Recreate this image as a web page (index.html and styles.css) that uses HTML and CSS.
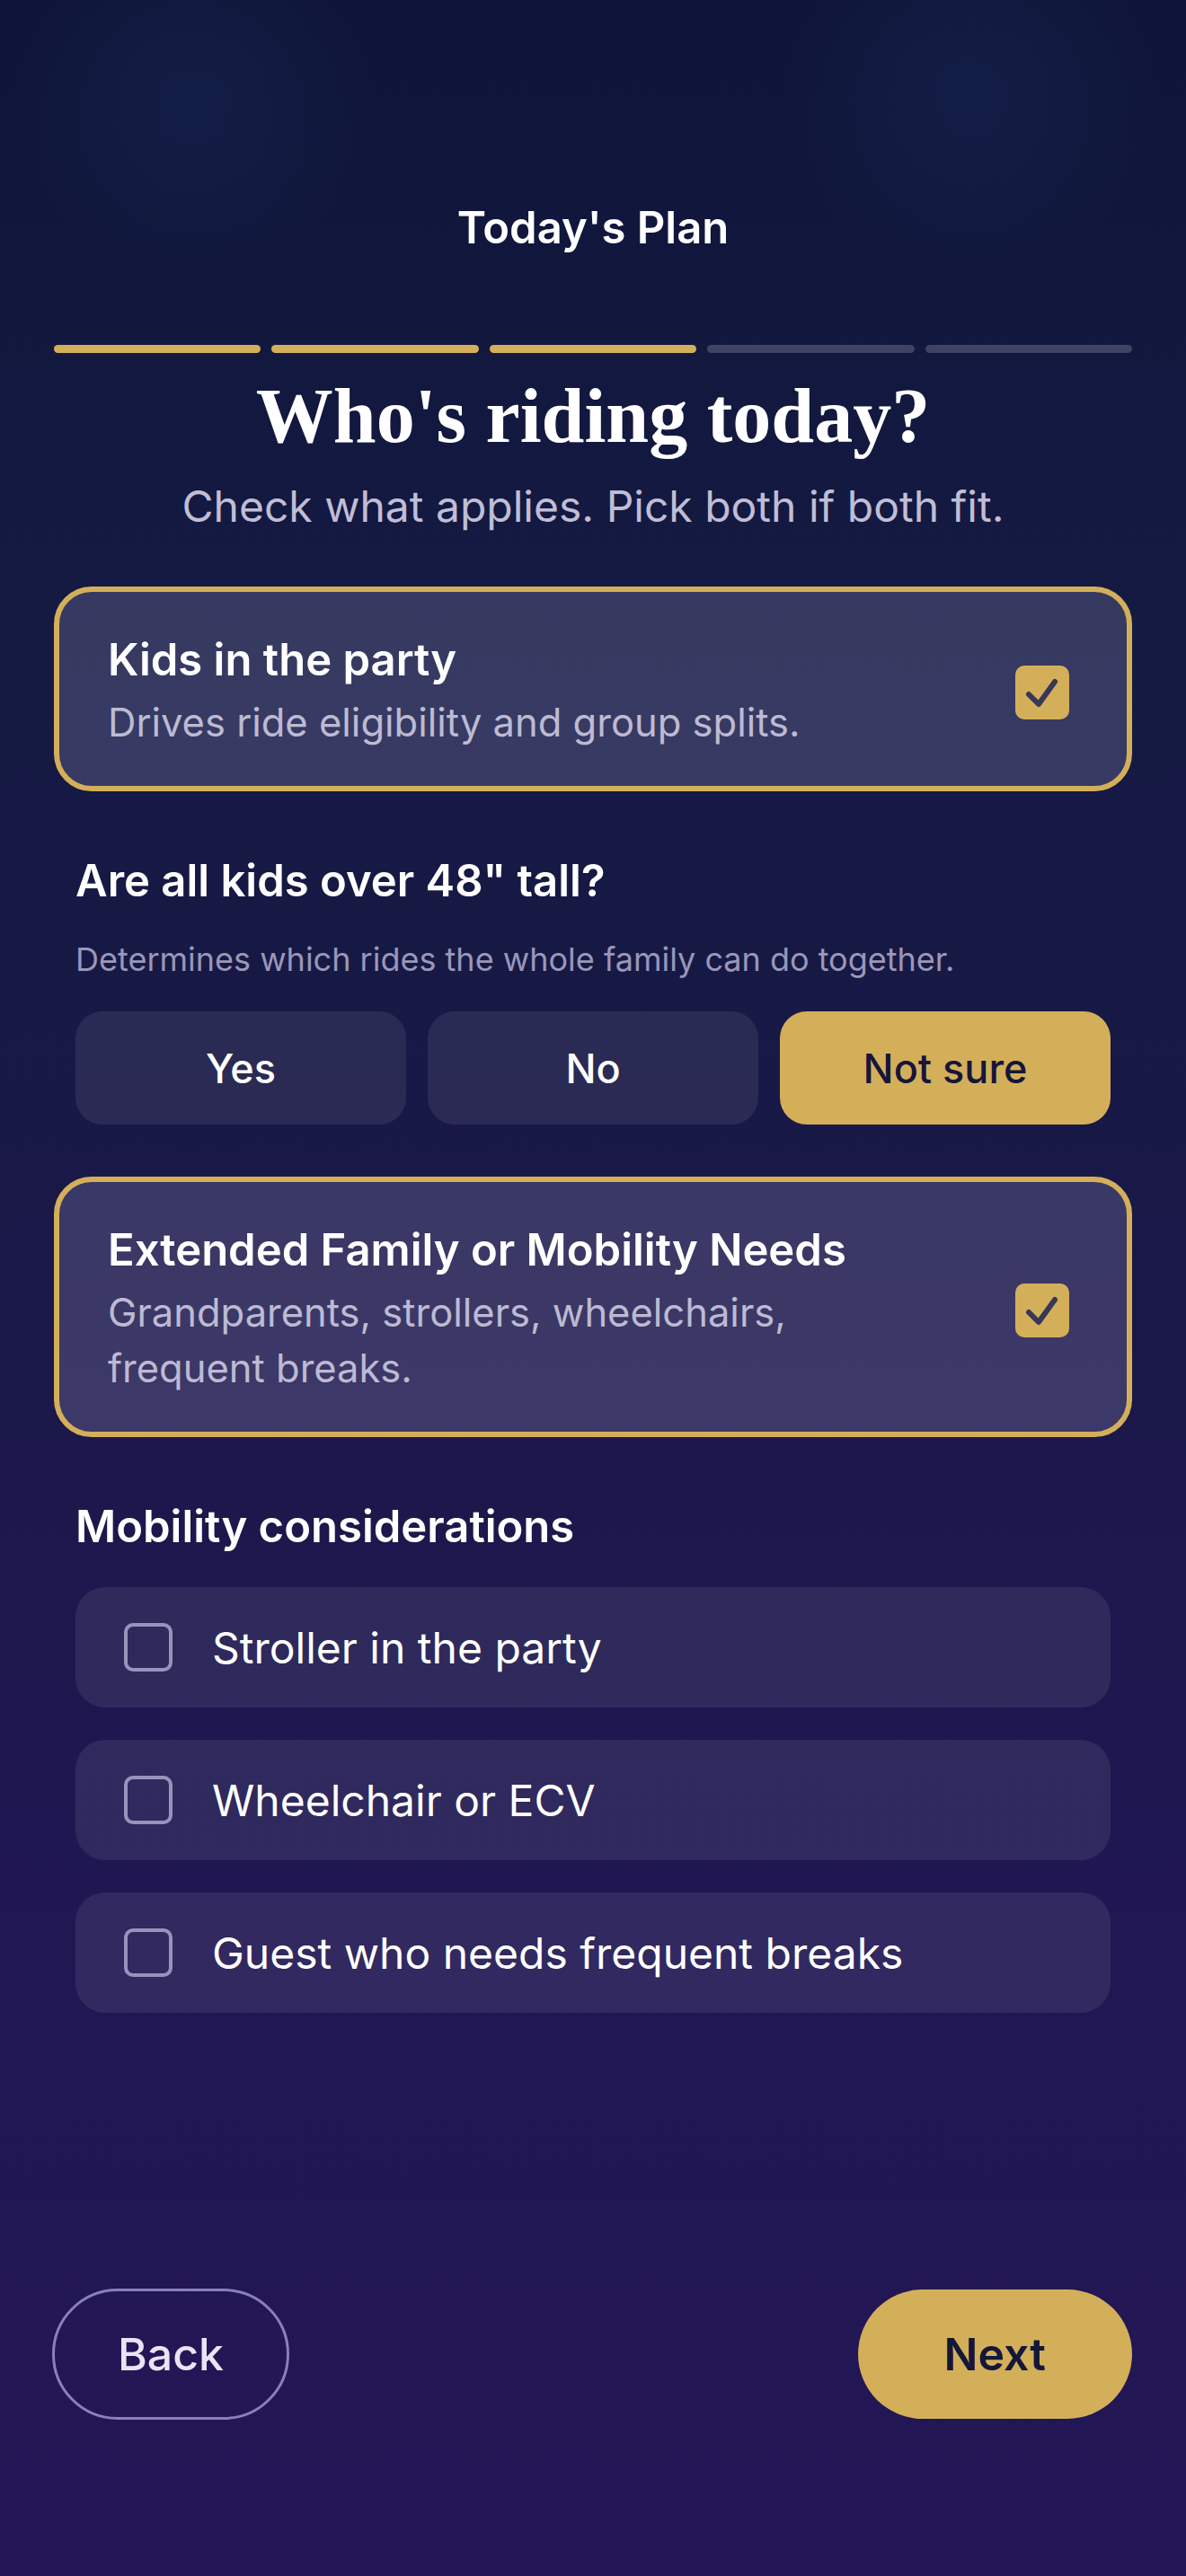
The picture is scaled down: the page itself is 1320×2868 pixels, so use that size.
FILE: index.html
```html
<!DOCTYPE html>
<html lang="en">
<head>
    <meta charset="UTF-8">
    <meta name="viewport" content="width=device-width, initial-scale=1.0">
    <title>Today's Plan</title>
    <link rel="stylesheet" href="styles.css">
</head>
<body>
    <div class="screen">
        <header class="topbar">
            <h2 class="topbar-title">Today's Plan</h2>
        </header>

        <div class="progress">
            <span class="step done"></span>
            <span class="step done"></span>
            <span class="step done"></span>
            <span class="step"></span>
            <span class="step"></span>
        </div>

        <h1 class="headline">Who's riding today?</h1>
        <p class="lead">Check what applies. Pick both if both fit.</p>

        <div class="option-card selected">
            <div class="option-text">
                <div class="option-title">Kids in the party</div>
                <div class="option-desc">Drives ride eligibility and group splits.</div>
            </div>
            <span class="check on">
                <svg viewBox="0 0 60 60" width="60" height="60"><path d="M15 32 L26 43 L44 18" /></svg>
            </span>
        </div>

        <section class="followup">
            <h3 class="followup-title">Are all kids over 48" tall?</h3>
            <p class="followup-hint">Determines which rides the whole family can do together.</p>
            <div class="segmented">
                <button class="seg">Yes</button>
                <button class="seg">No</button>
                <button class="seg active">Not sure</button>
            </div>
        </section>

        <div class="option-card selected">
            <div class="option-text">
                <div class="option-title">Extended Family or Mobility Needs</div>
                <div class="option-desc">Grandparents, strollers, wheelchairs, frequent breaks.</div>
            </div>
            <span class="check on">
                <svg viewBox="0 0 60 60" width="60" height="60"><path d="M15 32 L26 43 L44 18" /></svg>
            </span>
        </div>

        <section class="followup">
            <h3 class="followup-title">Mobility considerations</h3>
            <div class="toggle-list">
                <label class="toggle-row"><span class="box"></span>Stroller in the party</label>
                <label class="toggle-row"><span class="box"></span>Wheelchair or ECV</label>
                <label class="toggle-row"><span class="box"></span>Guest who needs frequent breaks</label>
            </div>
        </section>

        <footer class="nav">
            <button class="btn-back">Back</button>
            <button class="btn-next">Next</button>
        </footer>
    </div>
</body>
</html>
```

FILE: styles.css
```css
* {
    box-sizing: border-box;
}
body {
    margin: 0;
    font-family: Inter, "Noto Sans", sans-serif;
    color: #ffffff;
    background-color: #171845;
    background-image:
        radial-gradient(circle at 215px 110px, rgba(24, 44, 92, 0.35) 0, rgba(24, 44, 92, 0) 200px),
        radial-gradient(circle at 1080px 100px, rgba(24, 44, 92, 0.35) 0, rgba(24, 44, 92, 0) 210px),
        linear-gradient(180deg, #0f1539 0%, #141a42 25%, #1a1848 50%, #201753 75%, #241656 100%);
}
.screen {
    min-height: 100vh;
    display: flex;
    flex-direction: column;
    padding: 0 60px 174px;
}
.topbar {
    padding-top: 224px;
    text-align: center;
}
.topbar-title {
    margin: 0;
    font-size: 49px;
    line-height: 60px;
    font-weight: 600;
}
.progress {
    margin-top: 100px;
    display: flex;
    gap: 12px;
}
.step {
    flex: 1;
    height: 9px;
    border-radius: 5px;
    background: #3f4263;
}
.step.done {
    background: #d4af5a;
}
.headline {
    margin: 20px 0 0;
    text-align: center;
    font-family: "Liberation Serif", "DejaVu Serif", serif;
    font-size: 86px;
    line-height: 100px;
    font-weight: 700;
}
.lead {
    margin: 21px 0 0;
    text-align: center;
    font-size: 48px;
    line-height: 60px;
    color: #c0bdd6;
}
.option-card {
    margin-top: 59px;
    display: flex;
    align-items: center;
    justify-content: space-between;
    padding: 48px 64px 40px 54px;
    border-radius: 42px;
    background: rgba(228, 220, 255, 0.17);
    border: 6px solid transparent;
}
.option-card.selected {
    border-color: #d4af5a;
}
.option-text {
    max-width: 900px;
}
.option-title {
    font-size: 49px;
    line-height: 56px;
    font-weight: 600;
}
.option-desc {
    margin-top: 10px;
    font-size: 43.5px;
    line-height: 62px;
    color: #bdbad3;
}
.check {
    flex: none;
    width: 60px;
    height: 60px;
    border-radius: 10px;
    display: flex;
}
.check.on {
    background: #d4af5a;
}
.check svg path {
    fill: none;
    stroke: #383757;
    stroke-width: 6;
    stroke-linecap: round;
    stroke-linejoin: round;
}
.followup {
    margin-top: 70px;
    padding: 0 24px;
}
.followup + .option-card {
    margin-top: 58px;
}
.followup-title {
    margin: 0;
    font-size: 49px;
    line-height: 60px;
    font-weight: 600;
}
.followup-hint {
    margin: 33px 0 0;
    font-size: 36px;
    line-height: 48px;
    color: #9a97b8;
}
.segmented {
    margin-top: 34px;
    display: flex;
    gap: 24px;
}
.seg {
    flex: 1;
    height: 126px;
    border: none;
    border-radius: 30px;
    background: rgba(255, 255, 255, 0.08);
    color: #ffffff;
    font-family: inherit;
    font-size: 45px;
    font-weight: 500;
}
.seg.active {
    background: #d4af5a;
    color: #15163a;
}
.toggle-list {
    margin-top: 37px;
    display: flex;
    flex-direction: column;
    gap: 36px;
}
.toggle-row {
    height: 134px;
    display: flex;
    align-items: center;
    gap: 44px;
    padding: 0 54px;
    border-radius: 33px;
    background: rgba(255, 255, 255, 0.08);
    font-size: 48px;
}
.box {
    flex: none;
    width: 54px;
    height: 54px;
    border: 4.5px solid #9893bb;
    border-radius: 10px;
}
.nav {
    margin-top: auto;
    display: flex;
    justify-content: space-between;
    align-items: center;
}
.btn-back,
.btn-next {
    height: 146px;
    border-radius: 73px;
    font-family: inherit;
    font-size: 50px;
}
.btn-back {
    margin-left: -2px;
    padding: 0 70px;
    background: transparent;
    border: 3px solid #8a80b8;
    color: #e8e4f6;
    font-weight: 500;
}
.btn-next {
    height: 144px;
    padding: 0 96px;
    background: #d4af5a;
    border: none;
    color: #151738;
    font-weight: 600;
}
```
